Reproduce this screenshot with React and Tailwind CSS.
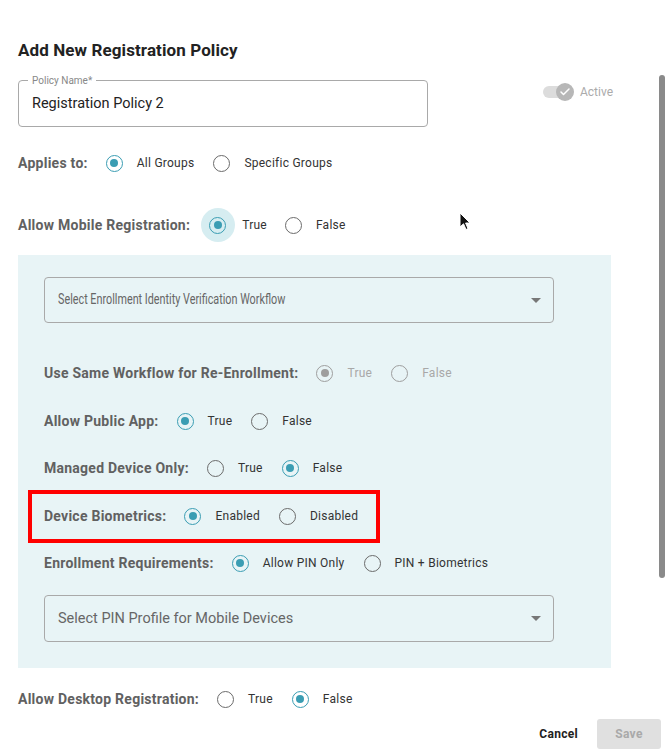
import { Check } from "lucide-react";

function Radio({ checked, disabled, halo }) {
    const ring = disabled
        ? "border-[#9e9e9e]"
        : checked
          ? "border-[#3a9db3]"
          : "border-[#6b6b6b]";
    return (
        <span className="relative flex h-[17px] w-[17px] shrink-0 items-center justify-center">
            {halo && (
                <span className="absolute left-1/2 top-1/2 h-[34px] w-[34px] -translate-x-1/2 -translate-y-1/2 rounded-full bg-[#d6edf1]" />
            )}
            <span
                className={`relative flex h-[17px] w-[17px] items-center justify-center rounded-full border-[1.5px] ${ring}`}
            >
                {checked && (
                    <span
                        className={`h-[8px] w-[8px] rounded-full ${disabled ? "bg-[#9e9e9e]" : "bg-[#3a9db3]"}`}
                    />
                )}
            </span>
        </span>
    );
}

function Option({ label, checked, disabled, halo }) {
    return (
        <div className="mr-[19px] flex items-center">
            <Radio checked={checked} disabled={disabled} halo={halo} />
            <span
                className={`ml-[14px] text-[12px] tracking-[0.25px] ${disabled ? "text-[#a8a8a8]" : "text-[#333]"}`}
            >
                {label}
            </span>
        </div>
    );
}

function Row({ label, options, className = "" }) {
    return (
        <div className={`flex h-[20px] items-center ${className}`}>
            <span className="mr-[18px] text-[14px] font-bold tracking-[0.25px] text-[#616161]">
                {label}
            </span>
            {options.map((o) => (
                <Option key={o.label} {...o} />
            ))}
        </div>
    );
}

function SelectBox({ placeholder, narrow, className = "" }) {
    return (
        <div
            className={`flex w-[510px] items-center justify-between rounded-[4px] border border-[#a9a9a9] pl-[13px] pr-[12px] ${className}`}
        >
            <span
                className={`whitespace-nowrap text-[14.5px] text-[#666] ${narrow ? "origin-left scale-x-[0.745]" : ""}`}
            >
                {placeholder}
            </span>
            <svg width="10" height="5" viewBox="0 0 10 5">
                <path d="M0 0 L10 0 L5 5 Z" fill="#777" />
            </svg>
        </div>
    );
}

export default function App() {
    return (
        <div
            className="relative h-[756px] w-[666px] overflow-hidden bg-white pl-[18px]"
            style={{ fontFamily: "Roboto, 'Noto Sans', sans-serif" }}
        >
            <h1 className="pt-[40px] text-[17px] font-bold leading-[20px] tracking-[0.1px] text-[#222]">
                Add New Registration Policy
            </h1>

            <div className="mt-[20px] flex items-start">
                <div className="relative flex h-[47px] w-[410px] items-center rounded-[4px] border border-[#a9a9a9] pl-[13px]">
                    <span className="absolute -top-[8px] left-[9px] bg-white px-[4px] text-[10px] text-[#888]">
                        Policy Name*
                    </span>
                    <span className="text-[14.5px] text-[#222]">Registration Policy 2</span>
                </div>
                <div className="ml-[115px] mt-[2px] flex items-center">
                    <div className="relative h-[20px] w-[32px]">
                        <span className="absolute left-0 top-[4px] h-[12px] w-[30px] rounded-full bg-[#dcdcdc]" />
                        <span className="absolute left-[13px] top-[1px] flex h-[18px] w-[18px] items-center justify-center rounded-full bg-[#b7b7b7]">
                            <Check className="h-[12px] w-[12px] text-white" strokeWidth={3} />
                        </span>
                    </div>
                    <span className="ml-[5px] text-[12px] text-[#ababab]">Active</span>
                </div>
            </div>

            <Row
                className="mt-[26px]"
                label="Applies to:"
                options={[
                    { label: "All Groups", checked: true },
                    { label: "Specific Groups" },
                ]}
            />

            <div className="mt-[36px] flex h-[32px] items-center">
                <span className="mr-[18px] text-[14px] font-bold tracking-[0.25px] text-[#616161]">
                    Allow Mobile Registration:
                </span>
                <div className="ml-[1px] mr-[18px] flex items-center">
                    <Radio checked halo />
                    <span className="ml-[16px] text-[12px] tracking-[0.25px] text-[#333]">True</span>
                </div>
                <Option label="False" />
            </div>

            <div className="mt-[14px] w-[593px] bg-[#e8f4f6] pb-[26px] pl-[26px] pt-[22px]">
                <SelectBox
                    className="h-[46px]"
                    narrow
                    placeholder="Select Enrollment Identity Verification Workflow"
                />
                <Row
                    className="mt-[40px]"
                    label="Use Same Workflow for Re-Enrollment:"
                    options={[
                        { label: "True", checked: true, disabled: true },
                        { label: "False", disabled: true },
                    ]}
                />
                <Row
                    className="mt-[28px]"
                    label="Allow Public App:"
                    options={[{ label: "True", checked: true }, { label: "False" }]}
                />
                <Row
                    className="mt-[27px]"
                    label="Managed Device Only:"
                    options={[{ label: "True" }, { label: "False", checked: true }]}
                />
                <div className="relative mt-[28px]">
                    <span className="absolute -left-[16px] -top-[16px] h-[53px] w-[352px] border-[4px] border-[#ff0000]" />
                    <Row
                        label="Device Biometrics:"
                        options={[{ label: "Enabled", checked: true }, { label: "Disabled" }]}
                    />
                </div>
                <Row
                    className="mt-[27px]"
                    label="Enrollment Requirements:"
                    options={[
                        { label: "Allow PIN Only", checked: true },
                        { label: "PIN + Biometrics" },
                    ]}
                />
                <SelectBox
                    className="mt-[22px] h-[47px]"
                    placeholder="Select PIN Profile for Mobile Devices"
                />
            </div>

            <Row
                className="mt-[21px]"
                label="Allow Desktop Registration:"
                options={[{ label: "True" }, { label: "False", checked: true }]}
            />

            <div className="mt-[10px] flex items-center justify-end pr-[5px]">
                <button className="mr-[19px] text-[12px] font-bold tracking-wide text-[#222]">
                    Cancel
                </button>
                <button className="h-[30px] w-[64px] rounded-[3px] bg-[#e0e0e0] text-[12px] font-bold tracking-wide text-[#a9a9a9]">
                    Save
                </button>
            </div>

            <span className="absolute right-[1px] top-[75px] h-[503px] w-[6px] rounded-full bg-[#8a8a8a]" />

            <svg
                className="absolute left-[459px] top-[212px]"
                width="12"
                height="19"
                viewBox="0 0 12 19"
            >
                <path
                    d="M1 1 L1 15 L4.5 11.8 L7 17.5 L9 16.6 L6.6 11 L11 11 Z"
                    fill="#111"
                    stroke="#fff"
                    strokeWidth="1"
                    strokeLinejoin="round"
                />
            </svg>
        </div>
    );
}
